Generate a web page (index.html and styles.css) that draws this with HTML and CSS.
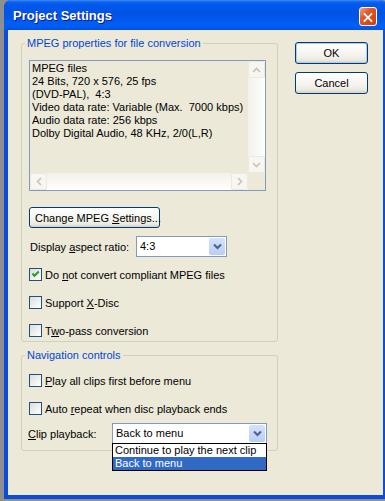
FILE: index.html
```html
<!DOCTYPE html>
<html lang="en">
<head>
  <meta charset="UTF-8">
  <title>Project Settings</title>
  <link rel="stylesheet" href="styles.css">
</head>
<body>
<div class="window">
  <div class="titlebar">
    <span class="title">Project Settings</span>
    <span class="close">
      <svg width="18" height="19" viewBox="0 0 18 19"><path d="M5 5.5 L13 13.5 M13 5.5 L5 13.5" stroke="#fff" stroke-width="2" stroke-linecap="square"/></svg>
    </span>
  </div>
  <div class="client">
    <div class="main">
      <fieldset class="group">
        <legend>MPEG properties for file conversion</legend>
        <div class="group-body first">
          <div class="info">
            <div class="info-text">
              <div class="line">MPEG files</div>
              <div class="line">24 Bits, 720 x 576, 25 fps</div>
              <div class="line">(DVD-PAL),  4:3</div>
              <div class="line">Video data rate: Variable (Max.  7000 kbps)</div>
              <div class="line">Audio data rate: 256 kbps</div>
              <div class="line">Dolby Digital Audio, 48 KHz, 2/0(L,R)</div>
            </div>
            <div class="vscroll">
              <span class="sb-btn"><svg width="9" height="6" viewBox="0 0 9 6"><path d="M1 5 L4.5 1.5 L8 5" fill="none" stroke="#c6c4b6" stroke-width="1.6"/></svg></span>
              <span class="sb-btn"><svg width="9" height="6" viewBox="0 0 9 6"><path d="M1 1 L4.5 4.5 L8 1" fill="none" stroke="#c6c4b6" stroke-width="1.6"/></svg></span>
            </div>
            <div class="hscroll">
              <span class="sb-btn"><svg width="6" height="9" viewBox="0 0 6 9"><path d="M5 1 L1.5 4.5 L5 8" fill="none" stroke="#c6c4b6" stroke-width="1.6"/></svg></span>
              <span class="sb-btn"><svg width="6" height="9" viewBox="0 0 6 9"><path d="M1 1 L4.5 4.5 L1 8" fill="none" stroke="#c6c4b6" stroke-width="1.6"/></svg></span>
            </div>
            <div class="sb-corner"></div>
          </div>

          <button class="btn btn-wide">Change MPEG <u>S</u>ettings...</button>

          <div class="field">
            <span class="field-label aspect">Display <u>a</u>spect ratio:</span>
            <div class="combo combo-aspect">
              <span class="combo-value">4:3</span>
              <span class="combo-btn"><svg width="9" height="7" viewBox="0 0 9 7"><path d="M1 1.5 L4.5 5 L8 1.5" fill="none" stroke="#4d6185" stroke-width="2"/></svg></span>
            </div>
          </div>

          <div class="checks">
            <label class="check"><span class="box"><svg width="11" height="11" viewBox="0 0 11 11"><path d="M2.5 4.5 L4.5 6.8 L8.8 2.5" fill="none" stroke="#21a121" stroke-width="2"/></svg></span><span>Do <u>n</u>ot convert compliant MPEG files</span></label>
            <label class="check"><span class="box"></span><span>Support <u>X</u>-Disc</span></label>
            <label class="check"><span class="box"></span><span>T<u>w</u>o-pass conversion</span></label>
          </div>
        </div>
      </fieldset>

      <fieldset class="group group-nav">
        <legend>Navigation controls</legend>
        <div class="group-body second">
          <div class="checks">
            <label class="check"><span class="box"></span><span><u>P</u>lay all clips first before menu</span></label>
            <label class="check"><span class="box"></span><span>Auto <u>r</u>epeat when disc playback ends</span></label>
          </div>

          <div class="field">
            <span class="field-label clip"><u>C</u>lip playback:</span>
            <div class="combo combo-clip">
              <span class="combo-value">Back to menu</span>
              <span class="combo-btn"><svg width="9" height="7" viewBox="0 0 9 7"><path d="M1 1.5 L4.5 5 L8 1.5" fill="none" stroke="#4d6185" stroke-width="2"/></svg></span>
              <ul class="dropdown">
                <li>Continue to play the next clip</li>
                <li class="selected">Back to menu</li>
              </ul>
            </div>
          </div>
        </div>
      </fieldset>
    </div>

    <div class="side">
      <button class="btn btn-side btn-default">OK</button>
      <button class="btn btn-side">Cancel</button>
    </div>
  </div>
</div>
</body>
</html>
```

FILE: styles.css
```css
body { margin: 0; background: #8f8f8f; overflow: hidden; font: 11px "Liberation Sans", Arial, sans-serif; color: #000; }
u { text-decoration: underline; text-underline-offset: 1px; }

.window { margin-left: 4px; width: 383px; height: 499px; background: #0b4cd8; border-radius: 7px 7px 0 0; display: flex; flex-direction: column; }
.titlebar { height: 30px; flex: none; display: flex; align-items: flex-start; padding-left: 9px; border-radius: 7px 7px 0 0;
  background: linear-gradient(to bottom, #3d8ff8 0, #0d62ea 2px, #0058ee 5px, #0054e4 45%, #005ff6 85%, #0053e6 100%); }
.title { flex: 1; color: #fff; font: bold 13px "Liberation Sans", Arial, sans-serif; line-height: 31px; text-shadow: 1px 1px #0a1883; }
.close { width: 18px; height: 19px; margin: 7px 10px 0 0; border: 1px solid #fff; border-radius: 3px; box-sizing: border-box;
  background: linear-gradient(135deg, #f2a58b 0, #e3582a 35%, #d13d0c 100%); display: flex; }

.client { flex: 1; margin: 0 4px 4px 4px; background: #ece9d8; display: flex; padding: 7px 0 0 13px; }
.main { width: 257px; flex: none; }
.side { margin-left: 17px; padding-top: 5px; display: flex; flex-direction: column; gap: 8px; }

.group { margin: 0; padding: 0; border: 1px solid #d0d0bf; border-radius: 3px; }
.group legend { margin-left: 3px; padding: 0 2px; color: #0046d5; line-height: 13px; }
.group-nav { margin-top: 7px; }
.group-body { padding: 0 7px; display: flex; flex-direction: column; align-items: flex-start; }
.group-body.first { padding-top: 10px; padding-bottom: 4px; }
.group-body.second { padding-top: 12px; padding-bottom: 6px; }

.info { width: 237px; height: 131px; box-sizing: border-box; border: 1px solid #7f9db9; display: grid; grid-template-columns: 1fr 17px; grid-template-rows: 1fr 17px; }
.info-text { padding: 1px 0 0 2px; line-height: 13px; overflow: hidden; }
.info-text .line { white-space: pre; }
.vscroll { display: flex; flex-direction: column; justify-content: space-between; background: linear-gradient(to right, #f3f1ec, #fefefb); }
.hscroll { display: flex; justify-content: space-between; background: linear-gradient(to bottom, #f3f1ec, #fefefb); }
.sb-btn { width: 17px; height: 17px; box-sizing: border-box; border: 1px solid #ebe9e0; border-radius: 2px; background: #f7f6f1; display: flex; align-items: center; justify-content: center; }
.sb-corner { background: #ece9d8; }

.btn { font: inherit; color: #000; border: 1px solid #003c74; border-radius: 3px; padding: 0; white-space: nowrap;
  background: linear-gradient(to bottom, #ffffff 0, #f4f3ee 60%, #ebe9e1 85%, #d6d0c5 100%); }
.btn-wide { width: 131px; height: 21px; margin-top: 16px; text-align: left; padding-left: 5px; }
.btn-side { width: 73px; height: 22px; }
.btn-default { box-shadow: inset 0 0 0 1px #b4c8f0; }

.field { display: flex; align-items: center; }
.field-label { flex: none; white-space: nowrap; }
.field-label.aspect { width: 106px; padding-left: 1px; }
.field-label.clip { width: 84px; margin-left: -1px; }
.combo { position: relative; display: flex; height: 21px; box-sizing: border-box; border: 1px solid #7f9db9; background: #fff; }
.combo-aspect { width: 91px; }
.combo-clip { width: 155px; }
.combo-value { flex: 1; padding-left: 3px; line-height: 19px; white-space: nowrap; }
.combo-btn { width: 16px; margin: 1px; border-radius: 2px; display: flex; align-items: center; justify-content: center;
  background: linear-gradient(to bottom, #d6e2fd, #b9cdf8); }
.group-body.first .field { margin-top: 8px; }
.group-body.second .field { margin-top: 8px; }

.dropdown { position: absolute; top: 100%; left: -1px; right: -1px; margin: 0; padding: 0; list-style: none; border: 1px solid #000; background: #fff; }
.dropdown li { line-height: 13px; padding-left: 2px; white-space: nowrap; }
.dropdown li.selected { background: #316ac5; color: #fff; }

.checks { display: flex; flex-direction: column; gap: 15px; }
.group-body.first .checks { margin-top: 11px; }
.check { display: flex; align-items: center; gap: 3px; height: 13px; white-space: nowrap; }
.box { width: 13px; height: 13px; box-sizing: border-box; border: 1px solid #1c5180; background: linear-gradient(135deg, #dcdcd7, #ffffff); display: flex; }
```
